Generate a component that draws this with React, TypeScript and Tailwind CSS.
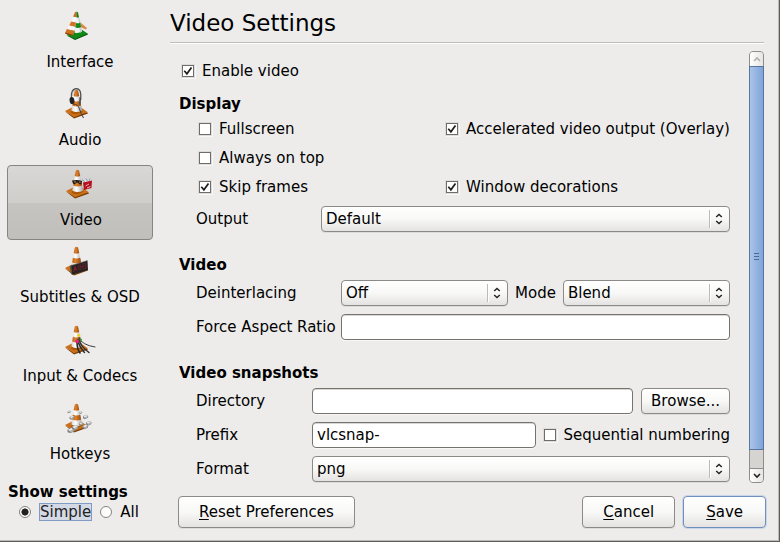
import { useState } from "react";
import type { ReactNode } from "react";

const FIELD =
  "h-[26px] rounded-[4px] border border-[#76736f] bg-white px-1 shadow-[inset_0_1px_0_#d8d7d5,0_1px_0_#f7f7f6] outline-none";
const BUTTON =
  "rounded-[4px] border border-[#8c8a87] bg-linear-to-b from-white via-[#f8f8f7] to-[#e4e3e1] shadow-[0_1px_0_#dddcda]";

function Cone() {
  return (
    <>
      <defs>
        <linearGradient id="coneWhite" x1="0" x2="1">
          <stop offset="0" stopColor="#d4d4d4" />
          <stop offset="0.4" stopColor="#ffffff" />
          <stop offset="1" stopColor="#a2a2a6" />
        </linearGradient>
        <linearGradient id="coneOrange" x1="0" x2="1">
          <stop offset="0" stopColor="#bd6618" />
          <stop offset="0.4" stopColor="#dd8230" />
          <stop offset="1" stopColor="#984808" />
        </linearGradient>
      </defs>
      <path d="M1 24.5 L10 31.4 L24 26.6 L23 25 L10 29 Z" fill="#7c3e06" />
      <path d="M1 24 L9 20 L17 20.5 L23.5 25 L10 30.2 Z" fill="#cb7018" />
      <path d="M7 26 Q13 29 18.6 24.6 L17 21 H8 Z" fill="#ab580b" />
      <path d="M10.8 3.5 Q12.3 2 14 3.5 L18.2 23.6 Q12.8 26.6 7.3 23.6 Z" fill="url(#coneWhite)" />
      <path d="M10.8 3.5 Q12.3 2 14 3.5 L15.2 9 Q12.5 10.5 9.7 9 Z" fill="url(#coneOrange)" />
      <path d="M8.9 13.8 Q12.5 15.3 16.2 13.8 L17.1 18.5 Q12.8 20.7 8.2 18.5 Z" fill="url(#coneOrange)" />
    </>
  );
}

function InterfaceArt() {
  return (
    <>
      <path d="M15 12 L17 14 L23 19 L22 20.5 L16 18 Z" fill="#d98a4a" />
      <path d="M2.7 26.5 L11 31 L24 25.6 L23 24 L11 28 Z" fill="#04520a" />
      <path d="M2.7 26 L9 20 L17.5 20.5 L23.6 24.4 L11 30 Z" fill="#0f8a19" />
      <path d="M11.5 3.5 Q12.7 2 14 3.5 L18 22.6 Q14 25 10.5 23.5 Z" fill="#f1f1f1" />
      <path d="M15.2 8 L18 22.6 Q17 23.6 16 23.8 L14.3 8 Z" fill="#c9cccb" />
      <path d="M12.3 2.8 Q13.6 2.4 14 3.5 L15 8 Q13.8 9 12.3 8.6 Z" fill="#14801c" />
      <path d="M11.8 14 Q14.5 14.8 16.2 13.4 L17.1 18 Q14.5 19.6 11.3 18.6 Z" fill="#118a1b" />
      <path d="M11 3.5 L12.4 2.6 L12.6 8.3 L9 7.7 Z" fill="#c56c20" />
      <path d="M9 7.7 L12.6 8.3 L12 13.4 L7.2 12.4 Z" fill="#f7f7f7" />
      <path d="M7.2 12.4 L12 13.4 L11.2 18 L5.2 16.6 Z" fill="#d37325" />
      <path d="M5.2 16.6 L11.2 18 L10.6 22 L3.2 20.2 Z" fill="#f7f7f7" />
      <path d="M2.8 20 L10.6 22 L9 26.4 L1.2 24 Z" fill="#d07022" />
      <path d="M1.2 23.6 L9 25.8 L8.4 27 L1.2 24.8 Z" fill="#8a4608" />
    </>
  );
}

function AudioArt() {
  return (
    <>
      <Cone />
      <path d="M7.4 12 Q6.5 1.8 12.5 1.6 Q18 2 16.6 13" fill="none" stroke="#4b4d50" strokeWidth="1.3" />
      <path d="M8.5 9 Q8.5 3 12.5 2.7" fill="none" stroke="#a5a8ab" strokeWidth="0.6" />
      <ellipse cx="8" cy="13.5" rx="2.4" ry="3.6" fill="#202326" transform="rotate(-10 8 13.5)" />
      <path d="M15.5 10 L17.2 11 L16.5 17 L15 18 Z" fill="#4a4d50" />
      <path d="M9 17 Q14 17 15.5 22 T19.5 31" fill="none" stroke="#3c3a38" strokeWidth="1" />
    </>
  );
}

function VideoArt() {
  return (
    <>
      <Cone />
      <path d="M18 14 L25 12.5 L27 15 L20 18 Z" fill="#e7eaf0" />
      <path d="M17 12.5 L20 15 M21 11.5 L22.5 14 M25 11.5 L24 14" stroke="#8a99ad" strokeWidth="1" />
      <path d="M18 15.5 L27 13.5 L26.5 21 L19 23 Z" fill="#b5101f" />
      <path d="M20.5 19 L24 17 M22 21 L25.5 19.5" stroke="#f5d9db" strokeWidth="0.8" />
      <path d="M7 13.6 Q12 12.2 17 14 L16.5 17 Q14.5 18 13 15.8 Q12 15.4 11.5 15.8 Q9.5 18.2 8 16.5 Z" fill="#1d1b1a" />
      <path d="M9 14.9 H11 M14 15.1 H15.7" stroke="#e28a31" strokeWidth="1" />
    </>
  );
}

function SubtitlesArt() {
  return (
    <>
      <Cone />
      <path d="M7 21.5 L23.5 16.5 L24 26 L8 30.8 Z" fill="#252323" />
      <path d="M5.8 22 L7 21.5 L8 30.8 L6.8 29.5 Z" fill="#55504e" />
      <path d="M7 21.5 L23.5 16.5" stroke="#77716e" strokeWidth="0.6" />
      <path d="M9.5 28 L11 22.5 L13 26.8 M10.3 25.8 L12.4 25.2" fill="none" stroke="#b41c29" strokeWidth="0.7" />
      <path
        d="M14.5 21.3 L16.5 20.7 L17 25.4 L15 26 Z M18.7 20 L21.7 19.2 L22 24 L19.2 24.9 Z M15 23.5 L22 21.6"
        fill="none"
        stroke="#7d1f28"
        strokeWidth="0.6"
      />
    </>
  );
}

function CodecsArt() {
  return (
    <>
      <Cone />
      <g fill="none" stroke="#2b2b2b" strokeLinecap="round">
        <path d="M15 15 Q18 22 31 24" strokeWidth="0.9" />
        <path d="M15 16 Q16 23 25 29.5" strokeWidth="1.4" />
        <path d="M13.5 17 Q16 25 20.5 29.5" strokeWidth="1.4" />
        <path d="M13 19 Q13 26 16 30" strokeWidth="1.6" />
      </g>
      <circle cx="14.7" cy="12.3" r="1.5" fill="#ead51e" />
      <circle cx="16.7" cy="16.7" r="1.3" fill="#2f9a36" />
      <circle cx="13.2" cy="18.3" r="1.9" fill="#e0247e" />
    </>
  );
}

function Key({ x, y, s }: { x: number; y: number; s: number }) {
  return (
    <g transform={`translate(${x} ${y}) scale(${s})`}>
      <path d="M0 2 L4 0 L7 1.5 L6.5 4 L2.5 6 L0 4.5 Z" fill="#858688" />
      <path d="M0.5 2 L4 0.4 L6.4 1.6 L2.6 3.8 Z" fill="#e8e8e9" />
      <path d="M2.6 4 L6.3 2 L6 3.7 L2.6 5.3 Z" fill="#b7b8b9" />
    </g>
  );
}

function HotkeysArt() {
  return (
    <>
      <Cone />
      <Key x={3.5} y={9.6} s={0.45} />
      <Key x={5.5} y={14.5} s={0.7} />
      <Key x={15.5} y={10.5} s={0.4} />
      <Key x={19} y={13.8} s={0.75} />
      <Key x={3.5} y={26.5} s={1} />
      <Key x={8} y={24} s={0.9} />
      <Key x={15} y={21} s={0.6} />
      <Key x={18.5} y={23.5} s={0.8} />
      <Key x={22} y={20} s={0.8} />
    </>
  );
}

const CATEGORIES: { name: string; art: ReactNode }[] = [
  { name: "Interface", art: <InterfaceArt /> },
  { name: "Audio", art: <AudioArt /> },
  { name: "Video", art: <VideoArt /> },
  { name: "Subtitles & OSD", art: <SubtitlesArt /> },
  { name: "Input & Codecs", art: <CodecsArt /> },
  { name: "Hotkeys", art: <HotkeysArt /> },
];

function Check({ label, checked = false }: { label: string; checked?: boolean }) {
  return (
    <label className="flex h-5 items-center gap-2 whitespace-nowrap">
      <span className="relative flex size-3 shrink-0">
        <input
          type="checkbox"
          defaultChecked={checked}
          className="peer size-3 appearance-none border border-[#6f6d6a] bg-white shadow-[0_0_0_1px_#dddcda,1px_1px_0_1px_#f8f8f8]"
        />
        <svg
          viewBox="0 0 12 12"
          className="pointer-events-none absolute inset-0 hidden size-3 peer-checked:block"
          fill="none"
          stroke="#1c1c1c"
          strokeWidth="1.7"
        >
          <path d="M2.3 5.8 L4.9 8.8 L9.5 2.4" />
        </svg>
      </span>
      {label}
    </label>
  );
}

function Select({ id, value }: { id: string; value: string }) {
  return (
    <div className="relative min-w-0 flex-1">
      <select id={id} className={`h-[26px] w-full appearance-none pr-6 pl-1 outline-none ${BUTTON}`}>
        <option>{value}</option>
      </select>
      <div className="pointer-events-none absolute inset-y-1 right-0 flex w-[21px] items-center justify-center border-l border-[#bdbbb8] pr-0.5 shadow-[inset_1px_0_0_#ffffff]">
        <svg viewBox="0 0 8 12" className="h-3 w-2" fill="none" stroke="#222222" strokeWidth="1.4">
          <path d="M1.2 4 L4 1.4 L6.8 4 M1.2 8 L4 10.6 L6.8 8" />
        </svg>
      </div>
    </div>
  );
}

function Heading({ children }: { children: ReactNode }) {
  return <h2 className="h-5 font-bold">{children}</h2>;
}

function Mnemonic({ text }: { text: string }) {
  return (
    <span>
      <span className="underline decoration-1 underline-offset-2 [text-decoration-skip-ink:none]">{text[0]}</span>
      {text.slice(1)}
    </span>
  );
}

function ScrollBar() {
  return (
    <div className="flex w-[15px] shrink-0 flex-col rounded-[4px] border border-[#8f8d8a] bg-[#d5d4d1]" aria-hidden="true">
      <div className="flex h-[14px] items-center justify-center rounded-t-[3px] bg-linear-to-r from-white to-[#e6e5e3]">
        <svg viewBox="0 0 8 6" className="h-1.5 w-2" fill="none" stroke="#b3b1ae" strokeWidth="1.6">
          <path d="M1 5 L4 2 L7 5" />
        </svg>
      </div>
      <div className="-mx-px flex flex-1 flex-col items-center justify-center gap-0.5 border border-[#58759f] bg-linear-to-r from-[#a9c4ea] to-[#80a4d8] pb-1">
        <span className="h-px w-[5px] bg-[#4c6a97]" />
        <span className="h-px w-[5px] bg-[#4c6a97]" />
        <span className="h-px w-[5px] bg-[#4c6a97]" />
      </div>
      <div className="h-[18px]" />
      <div className="flex h-[14px] items-center justify-center rounded-b-[3px] border-t border-[#8f8d8a] bg-linear-to-r from-white to-[#e6e5e3]">
        <svg viewBox="0 0 8 6" className="h-1.5 w-2" fill="none" stroke="#222222" strokeWidth="1.6">
          <path d="M1 1 L4 4 L7 1" />
        </svg>
      </div>
    </div>
  );
}

const RADIO =
  "size-3 shrink-0 appearance-none rounded-full border border-[#85827f] bg-white checked:bg-radial checked:from-[#222222] checked:from-45% checked:to-white checked:to-55%";

export default function App() {
  const [active, setActive] = useState("Video");

  return (
    <div className="flex min-h-screen border-r border-b border-[#5f5d5b] bg-[#edeceb] font-['DejaVu_Sans',sans-serif] text-[15px] leading-5 text-black shadow-[inset_-1px_-1px_0_#bbb9b6]">
      <aside className="flex w-[160px] shrink-0 flex-col pt-2 pb-[19px]">
        <nav className="flex flex-1 flex-col justify-between px-[7px]">
          {CATEGORIES.map(({ name, art }) => (
            <button
              key={name}
              type="button"
              onClick={() => setActive(name)}
              className={`flex h-[75px] flex-col items-center rounded-[4px] border ${
                name === active
                  ? "border-[#868482] bg-[linear-gradient(#d8d7d5,#cfcecb_50%,#c6c4c1_51%,#c1bfbc)] pt-px pl-0.5"
                  : "border-transparent"
              }`}
            >
              <svg viewBox="0 0 32 32" className="size-8">
                {art}
              </svg>
              <span className="mt-[11px] whitespace-nowrap">{name}</span>
            </button>
          ))}
        </nav>
        <fieldset className="pt-[7px] pl-2">
          <legend className="float-left h-5 w-full font-bold">Show settings</legend>
          <div className="clear-both flex items-center pl-[11px]">
            <input id="simple" type="radio" name="show" defaultChecked className={RADIO} />
            <label
              htmlFor="simple"
              className="ml-2 border border-[#7f9cc4] bg-[#d3dae5] leading-4 text-[#222222]"
            >
              Simple
            </label>
            <input id="all" type="radio" name="show" className={`ml-2 ${RADIO}`} />
            <label htmlFor="all" className="ml-2">
              All
            </label>
          </div>
        </fieldset>
      </aside>

      <main className="flex min-w-0 flex-1 flex-col pr-[13px] pl-[10px]">
        <h1 className="mr-0.5 h-[43px] border-b border-[#bfbdba] pt-[7px] text-[23px] leading-8 shadow-[0_1px_0_#ffffff]">
          Video Settings
        </h1>
        <div className="mt-2 mr-0.5 flex flex-1">
          <div className="min-w-0 flex-1 pt-[10px] pr-[19px] pb-px pl-[9px]">
            <div className="pl-[3px]">
              <Check label="Enable video" checked />
            </div>

            <section className="mt-[13px]">
              <Heading>Display</Heading>
              <div className="mt-[5px] grid grid-cols-[247px_1fr] gap-y-[9px] pl-5">
                <Check label="Fullscreen" />
                <Check label="Accelerated video output (Overlay)" checked />
                <div className="col-span-2">
                  <Check label="Always on top" />
                </div>
                <Check label="Skip frames" checked />
                <Check label="Window decorations" checked />
              </div>
              <div className="mt-[9px] flex items-center pl-[17px]">
                <label htmlFor="output" className="w-[125px]">
                  Output
                </label>
                <Select id="output" value="Default" />
              </div>
            </section>

            <section className="mt-[23px]">
              <Heading>Video</Heading>
              <div className="mt-[5px] flex flex-col gap-2 pl-[17px]">
                <div className="flex items-center">
                  <label htmlFor="deinterlacing" className="w-[145px]">
                    Deinterlacing
                  </label>
                  <Select id="deinterlacing" value="Off" />
                  <label htmlFor="mode" className="px-[7px]">
                    Mode
                  </label>
                  <Select id="mode" value="Blend" />
                </div>
                <div className="flex items-center">
                  <label htmlFor="ratio" className="w-[145px] whitespace-nowrap">
                    Force Aspect Ratio
                  </label>
                  <input id="ratio" type="text" className={`min-w-0 flex-1 ${FIELD}`} />
                </div>
              </div>
            </section>

            <section className="mt-[23px]">
              <Heading>Video snapshots</Heading>
              <div className="mt-[5px] flex flex-col gap-2 pl-[17px]">
                <div className="flex items-center">
                  <label htmlFor="directory" className="w-[116px]">
                    Directory
                  </label>
                  <input id="directory" type="text" className={`min-w-0 flex-1 ${FIELD}`} />
                  <button type="button" className={`ml-2 h-[26px] px-[9px] ${BUTTON}`}>
                    Browse...
                  </button>
                </div>
                <div className="flex items-center gap-2">
                  <label htmlFor="prefix" className="w-[108px]">
                    Prefix
                  </label>
                  <input id="prefix" type="text" defaultValue="vlcsnap-" className={`min-w-0 flex-1 ${FIELD}`} />
                  <Check label="Sequential numbering" />
                </div>
                <div className="flex items-center">
                  <label htmlFor="format" className="w-[116px]">
                    Format
                  </label>
                  <Select id="format" value="png" />
                </div>
              </div>
            </section>
          </div>
          <ScrollBar />
        </div>

        <footer className="mt-[13px] mb-[13px] flex gap-2 pl-2">
          <button type="button" className={`mr-auto h-8 px-5 ${BUTTON}`}>
            <Mnemonic text="Reset Preferences" />
          </button>
          <button type="button" className={`h-8 px-5 ${BUTTON}`}>
            <Mnemonic text="Cancel" />
          </button>
          <button
            type="submit"
            className="h-8 rounded-[4px] border border-[#6f8fbd] bg-linear-to-b from-white via-[#f8f8f7] to-[#e4e3e1] px-[22px] shadow-[0_0_0_1px_#c9d6e8]"
          >
            <Mnemonic text="Save" />
          </button>
        </footer>
      </main>
    </div>
  );
}
